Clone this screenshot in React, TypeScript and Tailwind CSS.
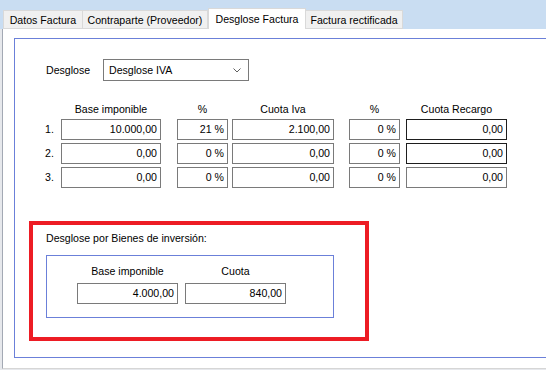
import React from "react";

function Field({ w, value, dark }: { w: string; value: string; dark?: boolean }) {
  return (
    <div
      className={
        "h-[21px] bg-white border flex items-center justify-end pr-[3px] shrink-0 " +
        w +
        " " +
        (dark ? "border-[#1e1e1e]" : "border-[#7a7a7a]")
      }
    >
      <span className="leading-[13px]">{value}</span>
    </div>
  );
}

function Header({ w, text, ml }: { w: string; text: string; ml: string }) {
  return <div className={"text-center shrink-0 leading-[13px] " + w + " " + ml}>{text}</div>;
}

function Row({ n, vals, darkRec }: { n: string; vals: string[]; darkRec: boolean }) {
  return (
    <div className="flex items-center h-[21px]">
      <div className="w-[16px] shrink-0 leading-[13px]">{n}</div>
      <Field w="w-[100px]" value={vals[0]} />
      <div className="w-[16px] shrink-0" />
      <Field w="w-[51px]" value={vals[1]} />
      <div className="w-[4px] shrink-0" />
      <Field w="w-[102px]" value={vals[2]} />
      <div className="w-[15px] shrink-0" />
      <Field w="w-[51px]" value={vals[3]} />
      <div className="w-[6px] shrink-0" />
      <Field w="w-[101px]" value={vals[4]} dark={darkRec} />
    </div>
  );
}

export default function App() {
  return (
    <div
      className="w-[546px] h-[370px] overflow-hidden bg-[#c9ddf2] flex flex-col text-[10.6px] leading-[13px] text-black"
      style={{ fontFamily: '"Liberation Sans", Arial, sans-serif' }}
    >
      {/* Tab strip */}
      <div className="h-[29px] flex items-end pl-[3px] shrink-0">
        <div className="w-[80px] h-[19px] bg-[#f0f0f0] border border-[#d9d9d9] flex items-center justify-center pt-[1px]">
          Datos Factura
        </div>
        <div className="w-[125px] h-[19px] bg-[#f0f0f0] border border-l-0 border-[#d9d9d9] flex items-center justify-center pt-[1px]">
          Contraparte (Proveedor)
        </div>
        <div className="w-[98px] h-[21px] bg-white border border-b-0 border-[#d9d9d9] flex items-start justify-center pt-[4px]">
          Desglose Factura
        </div>
        <div className="w-[97px] h-[19px] bg-[#f0f0f0] border border-l-0 border-[#d9d9d9] flex items-center justify-center pt-[1px]">
          Factura rectificada
        </div>
      </div>

      {/* Content */}
      <div className="flex-1 bg-[#e6e8ec] pl-[2px]">
        <div className="h-[340px] bg-white border-l border-l-[#a3a9b4] border-b border-b-[#d6d6d6] overflow-hidden">
          <div className="ml-[11px] mt-[9px] w-[560px] h-[320px] border border-[#6b80d9]">
            {/* Desglose selector */}
            <div className="flex items-center mt-[20px] ml-[31px]">
              <div className="w-[57px] shrink-0">Desglose</div>
              <div className="w-[146px] h-[22px] border border-[#7a7a7a] bg-white flex items-center pl-[5px] pr-[7px] justify-between">
                <span>Desglose IVA</span>
                <svg width="8" height="5" viewBox="0 0 8 5" className="mt-[1px]">
                  <path d="M0.5 0.5 L4 4 L7.5 0.5" fill="none" stroke="#606060" strokeWidth="1" />
                </svg>
              </div>
            </div>

            {/* Table */}
            <div className="ml-[30px] mt-[22px] flex flex-col gap-[3px]">
              <div className="flex">
                <div className="w-[16px] shrink-0" />
                <Header w="w-[100px]" ml="" text="Base imponible" />
                <Header w="w-[51px]" ml="ml-[16px]" text="%" />
                <Header w="w-[102px]" ml="ml-[4px]" text="Cuota Iva" />
                <Header w="w-[51px]" ml="ml-[15px]" text="%" />
                <Header w="w-[101px]" ml="ml-[6px]" text="Cuota Recargo" />
              </div>
              <Row n="1." vals={["10.000,00", "21 %", "2.100,00", "0 %", "0,00"]} darkRec />
              <Row n="2." vals={["0,00", "0 %", "0,00", "0 %", "0,00"]} darkRec />
              <Row n="3." vals={["0,00", "0 %", "0,00", "0 %", "0,00"]} darkRec={false} />
            </div>

            {/* Red highlighted area */}
            <div className="ml-[14px] mt-[33px] w-[340px] h-[120px] border-4 border-[#ed1c24]">
              <div className="ml-[13px] mt-[7px]">Desglose por Bienes de inversión:</div>
              <div className="ml-[13px] mt-[10px] w-[288px] h-[63px] border border-[#6b80d9]">
                <div className="flex ml-[30px] mt-[9px]">
                  <div className="w-[101px] text-center">Base imponible</div>
                  <div className="w-[101px] ml-[7px] text-center">Cuota</div>
                </div>
                <div className="flex ml-[30px] mt-[5px]">
                  <Field w="w-[101px]" value="4.000,00" />
                  <div className="w-[7px] shrink-0" />
                  <Field w="w-[101px]" value="840,00" />
                </div>
              </div>
            </div>
          </div>
        </div>
      </div>
    </div>
  );
}
